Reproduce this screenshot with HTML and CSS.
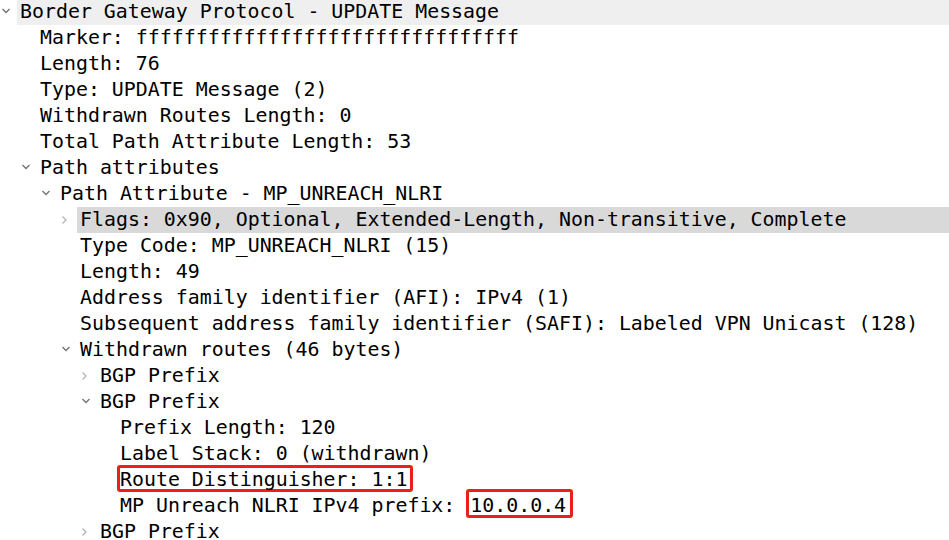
FILE: index.html
```html
<!DOCTYPE html>
<html lang="en">
<head>
  <title>Packet Details</title>
  <link rel="stylesheet" href="styles.css">
</head>
<body>
  <div class="tree">
    <div class="row lvl-0"><span class="tw open"><svg viewBox="0 0 20 26"><path d="M2.5 10 L6 13.5 L9.5 10"/></svg></span><span class="label soft">Border Gateway Protocol - UPDATE Message</span></div>
    <div class="row lvl-1"><span class="tw"></span><span class="label">Marker: ffffffffffffffffffffffffffffffff</span></div>
    <div class="row lvl-1"><span class="tw"></span><span class="label">Length: 76</span></div>
    <div class="row lvl-1"><span class="tw"></span><span class="label">Type: UPDATE Message (2)</span></div>
    <div class="row lvl-1"><span class="tw"></span><span class="label">Withdrawn Routes Length: 0</span></div>
    <div class="row lvl-1"><span class="tw"></span><span class="label">Total Path Attribute Length: 53</span></div>
    <div class="row lvl-1"><span class="tw open"><svg viewBox="0 0 20 26"><path d="M2.5 10 L6 13.5 L9.5 10"/></svg></span><span class="label">Path attributes</span></div>
    <div class="row lvl-2"><span class="tw open"><svg viewBox="0 0 20 26"><path d="M2.5 10 L6 13.5 L9.5 10"/></svg></span><span class="label">Path Attribute - MP_UNREACH_NLRI</span></div>
    <div class="row lvl-3"><span class="tw shut"><svg viewBox="0 0 20 26"><path d="M2.5 9.5 L6 13 L2.5 16.5"/></svg></span><span class="label selected">Flags: 0x90, Optional, Extended-Length, Non-transitive, Complete</span></div>
    <div class="row lvl-3"><span class="tw"></span><span class="label">Type Code: MP_UNREACH_NLRI (15)</span></div>
    <div class="row lvl-3"><span class="tw"></span><span class="label">Length: 49</span></div>
    <div class="row lvl-3"><span class="tw"></span><span class="label">Address family identifier (AFI): IPv4 (1)</span></div>
    <div class="row lvl-3"><span class="tw"></span><span class="label">Subsequent address family identifier (SAFI): Labeled VPN Unicast (128)</span></div>
    <div class="row lvl-3"><span class="tw open"><svg viewBox="0 0 20 26"><path d="M2.5 10 L6 13.5 L9.5 10"/></svg></span><span class="label">Withdrawn routes (46 bytes)</span></div>
    <div class="row lvl-4"><span class="tw shut"><svg viewBox="0 0 20 26"><path d="M2.5 9.5 L6 13 L2.5 16.5"/></svg></span><span class="label">BGP Prefix</span></div>
    <div class="row lvl-4"><span class="tw open"><svg viewBox="0 0 20 26"><path d="M2.5 10 L6 13.5 L9.5 10"/></svg></span><span class="label">BGP Prefix</span></div>
    <div class="row lvl-5"><span class="tw"></span><span class="label">Prefix Length: 120</span></div>
    <div class="row lvl-5"><span class="tw"></span><span class="label">Label Stack: 0 (withdrawn)</span></div>
    <div class="row lvl-5"><span class="tw"></span><span class="label"><span class="mark mark-rd">Route Distinguisher: 1:1</span></span></div>
    <div class="row lvl-5"><span class="tw"></span><span class="label">MP Unreach NLRI IPv4 prefix: <span class="mark mark-ip">10.0.0.4</span></span></div>
    <div class="row lvl-4"><span class="tw shut"><svg viewBox="0 0 20 26"><path d="M2.5 9.5 L6 13 L2.5 16.5"/></svg></span><span class="label">BGP Prefix</span></div>
  </div>
</body>
</html>
```

FILE: styles.css
```css
body {
  margin: 0;
  background: #fff;
  overflow: hidden;
}

.tree {
  margin-top: -1px;
  font-family: "DejaVu Sans Mono", "Liberation Mono", monospace;
  font-size: 19.9px;
  color: #000;
}

.row {
  display: flex;
  height: 26px;
  white-space: nowrap;
}

.lvl-0 { padding-left: 0; }
.lvl-1 { padding-left: 20px; }
.lvl-2 { padding-left: 40px; }
.lvl-3 { padding-left: 60px; }
.lvl-4 { padding-left: 80px; }
.lvl-5 { padding-left: 100px; }

.tw {
  flex: none;
  width: 20px;
  height: 26px;
}

.tw svg {
  display: block;
  width: 20px;
  height: 26px;
  fill: none;
  stroke-width: 1.3;
}

.tw.open svg {
  stroke: #707070;
}

.tw.shut svg {
  stroke: #b4b4b4;
}

.label {
  display: block;
  height: 26px;
  line-height: 26px;
}

.soft,
.selected {
  flex: 1;
  margin-left: -3px;
  padding-left: 3px;
}

.soft {
  background: #efefef;
  height: 25px;
  line-height: 24px;
  margin-top: 1px;
}

.selected {
  background: #d9d9d9;
}

.mark {
  display: inline-block;
  box-sizing: border-box;
  vertical-align: top;
  border: 3px solid #e8211c;
  border-radius: 3px;
}

.mark-rd {
  height: 27px;
  line-height: 23px;
  margin-top: -2px;
  margin-left: -3px;
  padding-right: 3px;
}

.mark-ip {
  height: 29px;
  line-height: 28px;
  margin-top: -4px;
  margin-left: -1px;
  padding-left: 1px;
  padding-right: 4px;
}
```
